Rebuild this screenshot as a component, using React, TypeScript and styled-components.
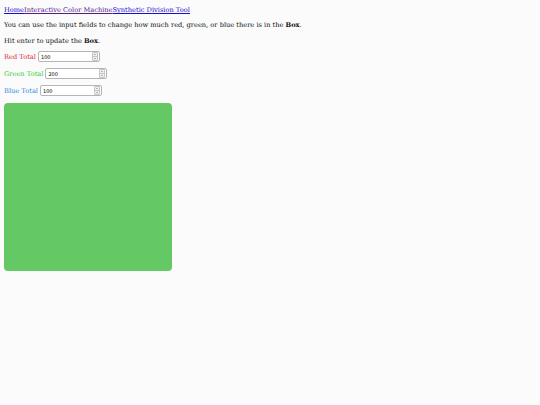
import React, { useState } from "react";
import styled, { createGlobalStyle } from "styled-components";

const GlobalStyle = createGlobalStyle`
  html, body {
    margin: 0;
    background: #fbfbfb;
  }
  body {
    padding: 4px;
    font-family: "DejaVu Serif", "Liberation Serif", serif;
    font-size: 6.65px;
    color: #111;
  }
`;

const Nav = styled.nav`
  display: flex;
  line-height: 10px;
  padding-top: 1px;
`;

const NavLink = styled.a<{ $visited?: boolean }>`
  color: ${(p) => (p.$visited ? "#551a8b" : "#1a0dcc")};
  text-decoration: underline;
`;

const Text = styled.p<{ $after: number }>`
  margin: 5px 0 ${(p) => p.$after}px;
  line-height: 10px;
`;

const Controls = styled.div`
  display: flex;
  flex-direction: column;
  gap: 6px;
  margin: 5px 0 7px;
`;

const Row = styled.div`
  display: flex;
  align-items: center;
  gap: 2px;
  height: 11px;
`;

const Label = styled.label<{ $color: string }>`
  color: ${(p) => p.$color};
`;

const InputShell = styled.div`
  display: flex;
  align-items: stretch;
  width: 62px;
  height: 11px;
  box-sizing: border-box;
  border: 1px solid #b5b5b5;
  border-radius: 2px;
  background: #fff;
`;

const NumberInput = styled.input`
  flex: 1;
  min-width: 0;
  border: none;
  outline: none;
  padding: 0 2px;
  font-family: "DejaVu Sans", Arial, sans-serif;
  font-size: 5px;
  background: transparent;
  -moz-appearance: textfield;
  &::-webkit-inner-spin-button,
  &::-webkit-outer-spin-button {
    -webkit-appearance: none;
    margin: 0;
  }
`;

const Spinner = styled.div`
  display: flex;
  flex-direction: column;
  width: 6px;
  margin: 0 1px 0 0;
  border: 1px solid #c4c4c4;
  border-radius: 1px;
  box-sizing: border-box;
`;

const SpinButton = styled.span<{ $down?: boolean }>`
  flex: 1;
  display: flex;
  align-items: center;
  justify-content: center;
  background: #f0f0f0;
  border-top: ${(p) => (p.$down ? "1px solid #c4c4c4" : "none")};
  &::before {
    content: "";
    border-left: 1.2px solid transparent;
    border-right: 1.2px solid transparent;
    ${(p) =>
      p.$down ? "border-top: 1.4px solid #777;" : "border-bottom: 1.4px solid #777;"}
  }
`;

const Box = styled.div<{ $bg: string }>`
  width: 168px;
  height: 168px;
  border-radius: 4px;
  background: ${(p) => p.$bg};
`;

export default function App() {
  const [values, setValues] = useState({ red: 100, green: 200, blue: 100 });
  const [applied, setApplied] = useState(values);

  const rows: { key: "red" | "green" | "blue"; label: string; color: string }[] = [
    { key: "red", label: "Red Total", color: "#e0263c" },
    { key: "green", label: "Green Total", color: "#33cc33" },
    { key: "blue", label: "Blue Total", color: "#2a8fe0" },
  ];

  return (
    <>
      <GlobalStyle />
      <Nav>
        <NavLink href="#">Home</NavLink>
        <NavLink href="#" $visited>
          Interactive Color Machine
        </NavLink>
        <NavLink href="#">Synthetic Division Tool</NavLink>
      </Nav>
      <Text $after={6}>
        You can use the input fields to change how much red, green, or blue there is in the <b>Box</b>.
      </Text>
      <Text $after={5}>
        Hit enter to update the <b>Box</b>.
      </Text>
      <Controls>
        {rows.map((r) => (
          <Row key={r.key}>
            <Label $color={r.color}>{r.label}</Label>
            <InputShell>
              <NumberInput
                type="number"
                value={values[r.key]}
                onChange={(e) => setValues({ ...values, [r.key]: Number(e.target.value) })}
                onKeyDown={(e) => e.key === "Enter" && setApplied(values)}
              />
              <Spinner>
                <SpinButton
                  onClick={() => setValues({ ...values, [r.key]: values[r.key] + 1 })}
                />
                <SpinButton
                  $down
                  onClick={() => setValues({ ...values, [r.key]: values[r.key] - 1 })}
                />
              </Spinner>
            </InputShell>
          </Row>
        ))}
      </Controls>
      <Box $bg={`rgb(${applied.red}, ${applied.green}, ${applied.blue})`} />
    </>
  );
}
